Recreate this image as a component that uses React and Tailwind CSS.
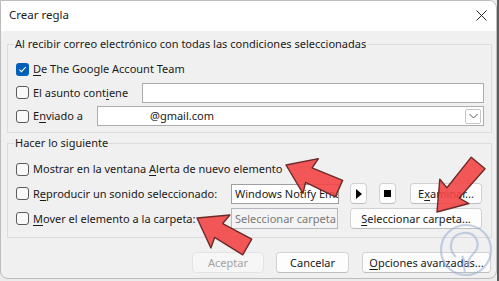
import React from "react";

const Check = ({ checked }) =>
  checked ? (
    <span className="flex h-[13px] w-[13px] shrink-0 items-center justify-center rounded-[3px] bg-[#005fb8]">
      <svg width="9" height="9" viewBox="0 0 9 9">
        <path d="M1.4 4.7 L3.5 6.7 L7.7 2.2" fill="none" stroke="#fff" strokeWidth="1.1" />
      </svg>
    </span>
  ) : (
    <span className="h-[13px] w-[13px] shrink-0 rounded-[3px] border border-[#5c5c5c] bg-[#f9f9f9]" />
  );

const Btn = ({ className = "", children, disabled }) => (
  <div
    className={`flex h-[21px] shrink-0 items-center justify-center whitespace-nowrap rounded-[4px] border ${
      disabled
        ? "border-[#e3e3e3] bg-[#f6f6f6] text-[#a3a3a3]"
        : "border-[#d2d2d2] border-b-[#bdbdbd] bg-[#fdfdfd] text-[#1a1a1a]"
    } ${className}`}
  >
    {children}
  </div>
);

const U = ({ children }) => <span className="underline underline-offset-[2px]">{children}</span>;

// flechas rojas de la captura (anotaciones)
const arrows = [
  { x: 286, y: 165, a: 24, l: 58 },
  { x: 437, y: 212, a: -50, l: 64 },
  { x: 197, y: 218, a: 30, l: 58 },
];

const Arrow = ({ x, y, a, l }) => (
  <g transform={`translate(${x} ${y}) rotate(${a})`}>
    <polygon
      points={`0,0 27,-19 25,-8 ${l},-9 ${l},9 25,8 27,19`}
      fill="#f24545"
      fillOpacity="0.9"
      stroke="#6e2a2a"
      strokeWidth="1.4"
      strokeLinejoin="round"
    />
  </g>
);

export default function App() {
  return (
    <div className="relative flex h-[281px] w-[499px] overflow-hidden bg-[#ececec] font-['Noto_Sans',sans-serif] text-[11px] leading-[16px] text-[#1a1a1a]">
      <div className="flex h-[279px] w-[497px] flex-col overflow-hidden rounded-tr-[8px] rounded-b-[8px] border border-[#bcbcbc] bg-[#f0f0f0]">
        <div className="flex h-[30px] shrink-0 items-center justify-between bg-white pb-[2px] pl-[8px] pr-[9px]">
          <span className="text-[11.5px]">Crear regla</span>
          <svg width="11" height="11" viewBox="0 0 11 11">
            <path d="M0.5 0.5 L10.5 10.5 M10.5 0.5 L0.5 10.5" stroke="#222" strokeWidth="1" />
          </svg>
        </div>

        <div className="ml-[6px] w-[485px] pt-[5px]">
          <fieldset className="border border-[#dcdcdc]">
            <legend className="ml-[6px] px-[1px]">Al recibir correo electrónico con todas las condiciones seleccionadas</legend>
            <div className="pb-[4px] pl-[8px] pr-[7px] pt-[5px]">
              <div className="flex h-[24px] items-center gap-[4px]">
                <Check checked />
                <span>
                  <U>D</U>e The Google Account Team
                </span>
              </div>
              <div className="flex h-[23px] items-center gap-[4px]">
                <Check />
                <span>
                  El asunto cont<U>i</U>ene
                </span>
                <div className="ml-auto h-[20px] w-[342px] border border-[#adadad] bg-white" />
              </div>
              <div className="flex h-[24px] items-center gap-[4px]">
                <Check />
                <span>
                  E<U>n</U>viado a
                </span>
                <div className="ml-auto flex h-[20px] w-[387px] items-center border border-[#adadad] bg-white pl-[52px] pr-[2px]">
                  <span>@gmail.com</span>
                  <div className="ml-auto flex h-[15px] w-[16px] items-center justify-center rounded-[2px] border border-[#c6c6c6] bg-white">
                    <svg width="9" height="6" viewBox="0 0 9 6">
                      <path d="M0.5 1 L4.5 5 L8.5 1" fill="none" stroke="#444" strokeWidth="0.9" />
                    </svg>
                  </div>
                </div>
              </div>
            </div>
          </fieldset>

          <fieldset className="mt-[2px] border border-[#dcdcdc]">
            <legend className="ml-[6px] px-[1px]">Hacer lo siguiente</legend>
            <div className="pb-[6px] pl-[8px] pr-[7px] pt-[6px]">
              <div className="flex h-[24px] items-center gap-[4px]">
                <Check />
                <span>
                  Mostrar en la ventana <U>A</U>lerta de nuevo elemento
                </span>
              </div>
              <div className="flex h-[25px] items-center">
                <Check />
                <span className="ml-[4px] w-[198px] whitespace-nowrap">
                  R<U>e</U>producir un sonido seleccionado:
                </span>
                <div className="flex h-[20px] w-[108px] items-center overflow-hidden whitespace-nowrap border border-[#9f9f9f] bg-white pl-[3px]">
                  Windows Notify Email
                </div>
                <Btn className="ml-[11px] w-[17px]">
                  <svg width="6" height="10" viewBox="0 0 6 10">
                    <path d="M0 0 L6 5 L0 10 Z" fill="#000" />
                  </svg>
                </Btn>
                <Btn className="ml-[12px] w-[17px]">
                  <span className="h-[7px] w-[7px] bg-black" />
                </Btn>
                <Btn className="ml-[14px] w-[72px]">
                  <span>
                    E<U>x</U>aminar...
                  </span>
                </Btn>
              </div>
              <div className="flex h-[25px] items-center">
                <Check />
                <span className="ml-[4px] w-[198px] whitespace-nowrap">
                  <U>M</U>over el elemento a la carpeta:
                </span>
                <div className="flex h-[21px] w-[107px] items-center overflow-hidden whitespace-nowrap border border-[#b4b8be] bg-[#f4f4f4] pl-[3px] text-[#7a7a7a]">
                  Seleccionar carpeta
                </div>
                <Btn className="ml-[12px] w-[132px]">
                  <span>
                    <U>S</U>eleccionar carpeta...
                  </span>
                </Btn>
              </div>
            </div>
          </fieldset>

          <div className="mt-[14px] flex justify-end pr-[1px]">
            <Btn disabled className="w-[72px]">
              Aceptar
            </Btn>
            <Btn className="ml-[12px] w-[73px]">Cancelar</Btn>
            <Btn className="ml-[13px] w-[129px]">
              <span>
                <U>O</U>pciones avanzadas...
              </span>
            </Btn>
          </div>
        </div>
      </div>
      <div className="h-full w-[2px] bg-[#5e5e5e]" />

      <svg className="pointer-events-none absolute left-0 top-0" width="499" height="281">
        <g fill="none" stroke="#9fb3d3" strokeWidth="2.2" opacity="0.6">
          <circle cx="466" cy="250" r="25" />
          <path d="M456 257 C447 249 450 234 464 233 C477 232 482 246 473 254 C469 258 467 262 469 268" />
          <path d="M462 256 C466 261 463 266 465 272" />
        </g>
        {arrows.map((ar, i) => (
          <Arrow key={i} {...ar} />
        ))}
      </svg>
    </div>
  );
}
